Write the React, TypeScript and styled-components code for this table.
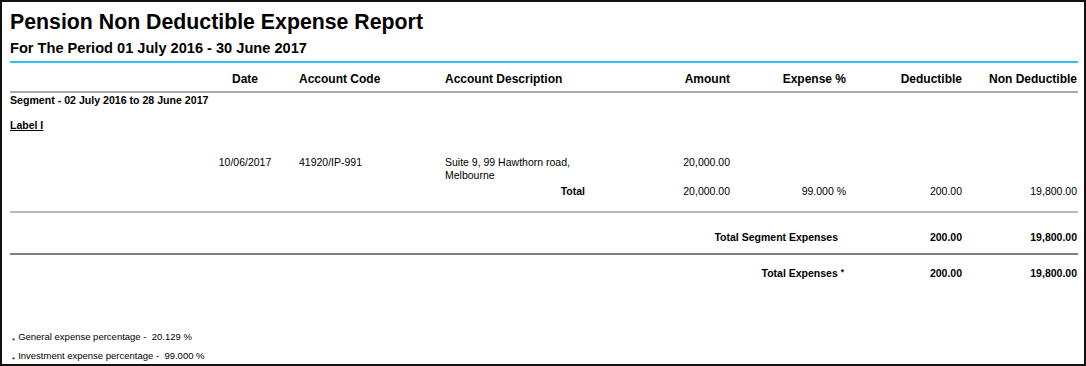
import styled, { createGlobalStyle } from "styled-components";

const GlobalStyle = createGlobalStyle`
  html, body {
    margin: 0;
    padding: 0;
    background: #fff;
  }
  body {
    font-family: "Liberation Sans", Arial, sans-serif;
    color: #000;
  }
`;

const COLUMNS = "190px 90px 155px 142px 143px 116px 116px 1fr";

type Align = "left" | "center" | "right";

const Page = styled.div`
  box-sizing: border-box;
  width: 1086px;
  height: 366px;
  border: 2px solid #111;
  padding: 0 6px 0 8px;
  display: flex;
  flex-direction: column;
  background: #fff;
`;

const Title = styled.h1`
  margin: 7px 0 0;
  font-size: 21.3px;
  line-height: 26px;
  font-weight: 700;
`;

const Subtitle = styled.h2`
  margin: 3px 0 0;
  font-size: 14.6px;
  line-height: 20px;
  font-weight: 700;
`;

const Rule = styled.div<{ $color: string; $top?: number }>`
  height: 2px;
  flex: none;
  margin-top: ${(p) => p.$top ?? 0}px;
  background: ${(p) => p.$color};
`;

const GridRow = styled.div`
  display: grid;
  grid-template-columns: ${COLUMNS};
  padding-right: 1px;
`;

const HeaderRow = styled(GridRow)`
  padding-top: 9px;
  padding-bottom: 5px;
  font-size: 12px;
  line-height: 14px;
  font-weight: 700;
`;

const DataRow = styled(GridRow)<{ $top: number; $bold?: boolean }>`
  padding-top: ${(p) => p.$top}px;
  font-size: 10.5px;
  line-height: 13.3px;
  font-weight: ${(p) => (p.$bold ? 700 : 400)};
`;

const Cell = styled.div<{ $align?: Align; $pl?: number; $pr?: number; $col?: string }>`
  text-align: ${(p) => p.$align ?? "left"};
  padding-left: ${(p) => p.$pl ?? 0}px;
  padding-right: ${(p) => p.$pr ?? 0}px;
  ${(p) => (p.$col ? `grid-column: ${p.$col};` : "")}
`;

const Strong = styled.span`
  font-weight: 700;
`;

const Segment = styled.div`
  padding-top: 1px;
  font-size: 10.6px;
  line-height: 13px;
  font-weight: 700;
`;

const GroupLabel = styled.div`
  margin-top: 12px;
  font-size: 10.5px;
  line-height: 13px;
  font-weight: 700;
  text-decoration: underline;
`;

// small asterisk: raised after "Total Expenses", dropped before the notes
const Star = styled.span<{ $low?: boolean }>`
  position: relative;
  top: ${(p) => (p.$low ? 3 : -2)}px;
  font-size: ${(p) => (p.$low ? 8 : 8.5)}px;
  line-height: 0;
  margin-right: ${(p) => (p.$low ? 3 : 0)}px;
  font-weight: ${(p) => (p.$low ? 400 : 700)};
`;

const Footer = styled.div`
  margin-top: auto;
  padding: 0 0 2.8px 2px;
  display: flex;
  flex-direction: column;
  gap: 8.5px;
`;

const Note = styled.div`
  font-size: 9.5px;
  line-height: 11px;
  white-space: pre;
`;

const headers: { label: string; align: Align; pl?: number }[] = [
  { label: "", align: "left" },
  { label: "Date", align: "center" },
  { label: "Account Code", align: "left", pl: 9 },
  { label: "Account Description", align: "left" },
  { label: "Amount", align: "right" },
  { label: "Expense %", align: "right" },
  { label: "Deductible", align: "right" },
  { label: "Non Deductible", align: "right" },
];

const notes = [
  "General expense percentage -  20.129 %",
  "Investment expense percentage -  99.000 %",
];

export default function App() {
  return (
    <>
      <GlobalStyle />
      <Page>
        <Title>Pension Non Deductible Expense Report</Title>
        <Subtitle>For The Period 01 July 2016 - 30 June 2017</Subtitle>
        <Rule $color="#2cc3f2" $top={3} />

        <HeaderRow>
          {headers.map((h, i) => (
            <Cell key={i} $align={h.align} $pl={h.pl}>
              {h.label}
            </Cell>
          ))}
        </HeaderRow>
        <Rule $color="#ababab" />

        <Segment>Segment - 02 July 2016 to 28 June 2017</Segment>
        <GroupLabel>Label I</GroupLabel>

        <DataRow $top={24}>
          <Cell $col="2" $align="center">10/06/2017</Cell>
          <Cell $pl={9}>41920/IP-991</Cell>
          <Cell>Suite 9, 99 Hawthorn road, Melbourne</Cell>
          <Cell $align="right">20,000.00</Cell>
        </DataRow>
        <DataRow $top={2.5}>
          <Cell $col="4" $align="right" $pr={2}>
            <Strong>Total</Strong>
          </Cell>
          <Cell $align="right">20,000.00</Cell>
          <Cell $align="right">99.000 %</Cell>
          <Cell $align="right">200.00</Cell>
          <Cell $align="right">19,800.00</Cell>
        </DataRow>
        <Rule $color="#b8b8b8" $top={13} />

        <DataRow $top={18} $bold>
          <Cell $col="4 / 7" $align="right" $pr={8}>Total Segment Expenses</Cell>
          <Cell $align="right">200.00</Cell>
          <Cell $align="right">19,800.00</Cell>
        </DataRow>
        <Rule $color="#808080" $top={8.5} />

        <DataRow $top={12} $bold>
          <Cell $col="4 / 7" $align="right" $pr={2}>
            Total Expenses <Star>*</Star>
          </Cell>
          <Cell $align="right">200.00</Cell>
          <Cell $align="right">19,800.00</Cell>
        </DataRow>

        <Footer>
          {notes.map((n) => (
            <Note key={n}>
              <Star $low>*</Star>
              {n}
            </Note>
          ))}
        </Footer>
      </Page>
    </>
  );
}
